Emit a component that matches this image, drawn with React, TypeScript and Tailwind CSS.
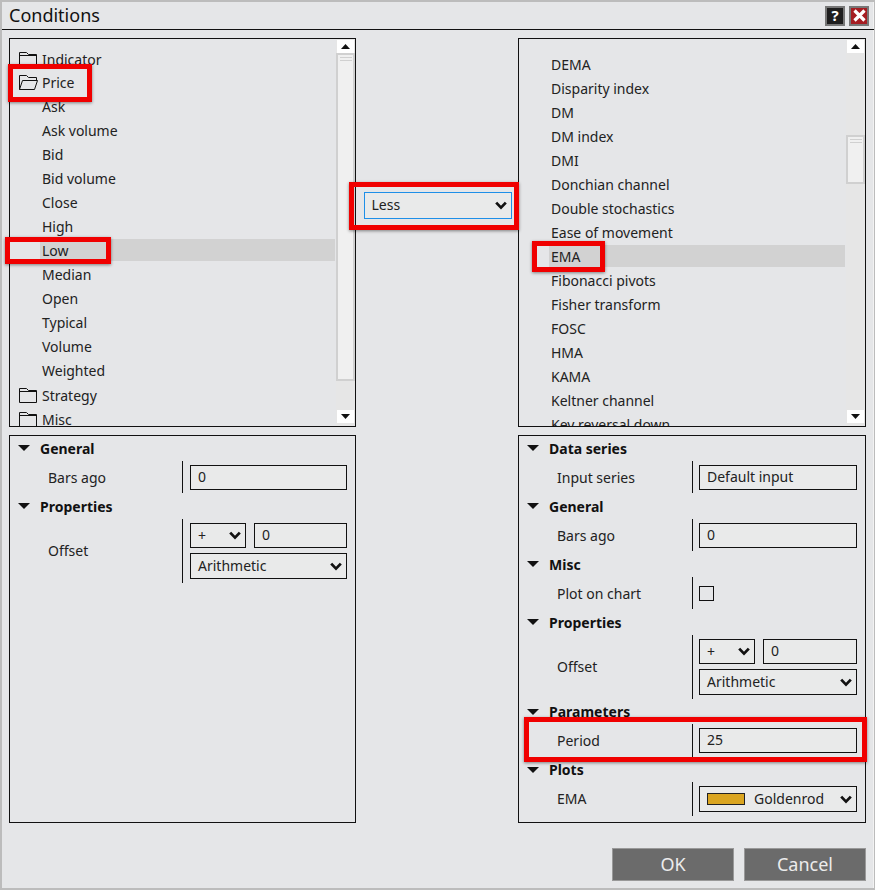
import React from "react";

const leftItems = ["Ask", "Ask volume", "Bid", "Bid volume", "Close", "High", "Low", "Median", "Open", "Typical", "Volume", "Weighted"];
const rightItems = [
  "DEMA", "Disparity index", "DM", "DM index", "DMI", "Donchian channel", "Double stochastics", "Ease of movement", "EMA",
  "Fibonacci pivots", "Fisher transform", "FOSC", "HMA", "KAMA", "Keltner channel", "Key reversal down",
];

const FolderClosed = () => (
  <svg width="20" height="17" viewBox="0 0 20 17" fill="none" stroke="#111" strokeWidth="1" className="shrink-0">
    <path d="M1.5 15.5V1.5H8.5L10.5 3.5H18.5V15.5Z M1.5 4.5H18.5" />
  </svg>
);

const FolderOpen = () => (
  <svg width="20" height="17" viewBox="0 0 20 17" fill="none" stroke="#111" strokeWidth="1" className="shrink-0">
    <path d="M1.5 15.5V1.5H8.5L10.5 3.5H18.5V6.5 M1.5 15.5L4.5 6.5H19.5L16.5 15.5Z" />
  </svg>
);

const Chevron = () => (
  <svg width="12" height="9" viewBox="0 0 12 9" fill="none" stroke="#111" strokeWidth="2.8" className="shrink-0">
    <path d="M1.2 1.6L6 6.6L10.8 1.6" />
  </svg>
);

const Triangle = () => (
  <svg width="12" height="6" viewBox="0 0 12 6" className="shrink-0">
    <path d="M0 0H12L6 6Z" fill="#111" />
  </svg>
);

const ScrollArrow = ({ up }: { up?: boolean }) => (
  <div className="flex h-[13px] w-[17px] items-center justify-center bg-white">
    <svg width="9" height="5" viewBox="0 0 9 5">
      <path d={up ? "M0 5H9L4.5 0Z" : "M0 0H9L4.5 5Z"} fill="#111" />
    </svg>
  </div>
);

const Scrollbar = ({ thumbTop, thumbHeight }: { thumbTop: number; thumbHeight: number }) => (
  <div className="absolute top-0 right-0 bottom-0 flex w-[19px] flex-col items-center bg-[#e6e6e6] pt-px pb-[3px]">
    <ScrollArrow up />
    <div className="relative w-full flex-1">
      <div
        className="absolute left-0 flex w-[19px] flex-col items-center gap-[2px] border-2 border-[#d0d0d0] bg-[#f0f0f0] pt-[2px]"
        style={{ top: thumbTop, height: thumbHeight }}
      >
        <div className="h-px w-[12px] bg-[#d0d0d0]" />
        <div className="h-px w-[12px] bg-[#d0d0d0]" />
      </div>
    </div>
    <ScrollArrow />
  </div>
);

const Section = ({ title, h = 26 }: { title: string; h?: number }) => (
  <div className="flex items-center pl-[8px] font-bold text-[#111]" style={{ height: h }}>
    <Triangle />
    <span className="ml-[10px]">{title}</span>
  </div>
);

const PropRow = ({ label, h = 32, left, lift, children }: { label: string; h?: number; left?: boolean; lift?: boolean; children: React.ReactNode }) => (
  <div className="flex items-stretch" style={{ height: h }}>
    <div className={"flex items-center pl-[38px] " + (left ? "w-[172px] " : "w-[173px] ") + (lift ? "pb-[2px]" : "")}>{label}</div>
    <div className="w-px bg-[#111]" />
    <div className={"flex flex-1 flex-col justify-center gap-[5px] pr-[8px] " + (left ? "pl-[7px]" : "pl-[6px]")}>{children}</div>
  </div>
);

const Input = ({ value, className = "" }: { value: string; className?: string }) => (
  <div className={"flex h-[25px] items-center border border-[#111] bg-[#e9eaea] pb-[2px] pl-[7px] " + className}>{value}</div>
);

const Select = ({ value, className = "" }: { value: React.ReactNode; className?: string }) => (
  <div className={"flex h-[26px] items-center justify-between border border-[#111] bg-[#e9eaea] pr-[4px] pl-[7px] " + className}>
    <div className="flex items-center pb-[2px]">{value}</div>
    <Chevron />
  </div>
);

const OffsetEditor = () => (
  <>
    <div className="flex h-[25px] gap-[8px]">
      <div className="flex h-[25px] w-[56px] items-center justify-between border border-[#111] bg-[#e9eaea] pr-[4px] pl-[7px]">
        +
        <Chevron />
      </div>
      <Input value="0" className="flex-1" />
    </div>
    <Select value="Arithmetic" />
  </>
);

const RedBox = ({ className }: { className: string }) => (
  <div className={"pointer-events-none absolute border-[5px] border-[#f00000] shadow-[0_1px_3px_rgba(0,0,0,0.45)] " + className} />
);

export default function App() {
  return (
    <div className="relative h-[890px] w-[875px] overflow-hidden border-t-2 border-r border-b-2 border-l-2 border-[#bcbcbc] bg-[#e5e6e8] font-['Noto_Sans','Open_Sans',sans-serif] text-[14px] text-[#222] shadow-[inset_-1px_0_0_#f2f2f2]">
      {/* title */}
      <div className="flex h-[28px] items-center justify-between border-b border-[#111] pr-[5px] pl-[7px]">
        <span className="text-[18px] text-[#111]">Conditions</span>
        <div className="flex gap-[4px]">
          <div className="flex h-[20px] w-[20px] items-center justify-center border-2 border-[#777] bg-[#1e1e1e] text-[15px] font-bold text-white">?</div>
          <div className="flex h-[20px] w-[20px] items-center justify-center border-2 border-[#777] bg-[#a51d22]">
            <svg width="13" height="13" viewBox="0 0 13 13" stroke="#fff" strokeWidth="3.2">
              <path d="M1.5 1.5L11.5 11.5M11.5 1.5L1.5 11.5" />
            </svg>
          </div>
        </div>
      </div>

      <div className="grid grid-cols-[347px_162px_348px] px-[7px] pt-[8px]">
        {/* left tree */}
        <div className="relative h-[389px] overflow-hidden border border-[#111] pt-[8px]">
          <div className="flex h-[24px] items-center gap-[4px] pl-[8px]"><FolderClosed />Indicator</div>
          <div className="flex h-[23px] items-center gap-[4px] pl-[8px]"><FolderOpen />Price</div>
          {leftItems.map((item) => (
            <div key={item} className="flex h-[24px] items-center pl-[32px]">
              <div className={"flex h-[22px] flex-1 items-center " + (item === "Low" ? "-ml-[2px] mr-[20px] bg-[#d2d2d2] pl-[2px]" : "")}>{item}</div>
            </div>
          ))}
          <div className="flex h-[26px] items-center gap-[4px] pl-[8px]"><FolderClosed />Strategy</div>
          <div className="flex h-[22px] items-center gap-[4px] pl-[8px]"><FolderClosed />Misc</div>
          <Scrollbar thumbTop={0} thumbHeight={328} />
        </div>

        {/* operator */}
        <div className="flex h-[389px] items-start justify-center pt-[154px] pl-[1px]">
          <div className="flex h-[27px] w-[148px] items-center justify-between border border-[#1e8fe8] bg-[#e9eaea] pr-[4px] pl-[7px]">
            <span className="pb-[2px]">Less</span>
            <Chevron />
          </div>
        </div>

        {/* right list */}
        <div className="relative h-[389px] overflow-hidden border border-[#111] pt-[13px]">
          {rightItems.map((item) => (
            <div key={item} className="flex h-[24px] items-center pl-[32px]">
              <div className={"flex h-[22px] flex-1 items-center " + (item === "EMA" ? "-ml-[2px] mr-[20px] bg-[#d2d2d2] pl-[2px]" : "")}>{item}</div>
            </div>
          ))}
          <Scrollbar thumbTop={82} thumbHeight={49} />
        </div>

        {/* left properties */}
        <div className="mt-[8px] h-[388px] border border-[#111]">
          <div className="-mt-px">
            <Section title="General" />
            <PropRow left label="Bars ago"><Input value="0" /></PropRow>
            <Section title="Properties" />
            <PropRow left lift label="Offset" h={64}><OffsetEditor /></PropRow>
          </div>
        </div>

        <div />

        {/* right properties */}
        <div className="mt-[8px] h-[388px] border border-[#111]">
          <div className="-mt-px">
            <Section title="Data series" />
            <PropRow label="Input series"><Input value="Default input" /></PropRow>
            <Section title="General" />
            <PropRow label="Bars ago"><Input value="0" /></PropRow>
            <Section title="Misc" />
            <PropRow label="Plot on chart"><div className="h-[15px] w-[15px] border border-[#111]" /></PropRow>
            <Section title="Properties" />
            <PropRow lift label="Offset" h={64}><OffsetEditor /></PropRow>
            <Section title="Parameters" h={25} />
            <PropRow label="Period" h={33}><Input value="25" /></PropRow>
            <Section title="Plots" h={25} />
            <PropRow lift label="EMA" h={34}>
              <Select
                value={
                  <>
                    <div className="mt-[2px] mr-[9px] h-[12px] w-[38px] border border-[#222] bg-[#daa520]" />
                    Goldenrod
                  </>
                }
              />
            </PropRow>
          </div>
        </div>
      </div>

      {/* buttons */}
      <div className="mt-[25px] flex justify-end gap-[10px] pr-[8px]">
        <div className="flex h-[33px] w-[122px] items-center justify-center border border-[#999] bg-[#6b6b6b] text-[18px] text-[#ececec]">OK</div>
        <div className="flex h-[33px] w-[122px] items-center justify-center border border-[#999] bg-[#6b6b6b] text-[18px] text-[#ececec]">Cancel</div>
      </div>

      {/* annotations */}
      <RedBox className="top-[62px] left-[6px] h-[38px] w-[84px]" />
      <RedBox className="top-[235px] left-[3px] h-[27px] w-[106px]" />
      <RedBox className="top-[180px] left-[347px] h-[48px] w-[170px]" />
      <RedBox className="top-[239px] left-[530px] h-[31px] w-[73px]" />
      <RedBox className="top-[715px] left-[522px] h-[45px] w-[343px]" />
    </div>
  );
}
